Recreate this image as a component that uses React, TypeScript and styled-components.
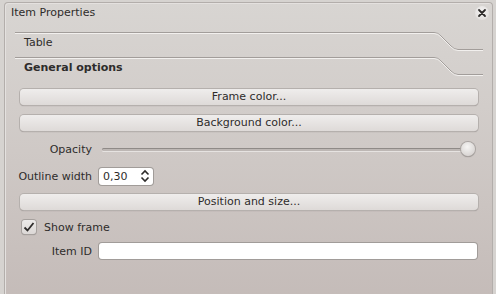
import React from 'react';
import styled, { createGlobalStyle } from 'styled-components';

const Global = createGlobalStyle`
  html, body {
    margin: 0;
    padding: 0;
    background: #d6d3d0;
  }
  body {
    font-family: "DejaVu Sans", "Liberation Sans", sans-serif;
    font-size: 11px;
    color: #2e2c2b;
  }
`;

const TabLine = ({ bold, label }: { bold?: boolean; label: string }) => (
  <Header>
    <svg className="line" width="470" height="26" viewBox="0 0 470 26">
      <path
        d="M0 1.5 H419 Q423 1.5 426 5 L436 15 Q439 18.5 443 18.5 H468"
        fill="none"
        stroke="#a29d9a"
        strokeWidth="1"
      />
      <path
        d="M0 2.5 H419 Q423 2.5 426 6 L436 16 Q439 19.5 443 19.5 H468"
        fill="none"
        stroke="#f2f0ee"
        strokeWidth="1"
      />
    </svg>
    <HeaderText $bold={bold}>{label}</HeaderText>
  </Header>
);

const App = () => {
  return (
    <Wrap>
      <Global />
      <Dock>
        <Title>
          <span>Item Properties</span>
          <Close>
            <svg width="10" height="10" viewBox="0 0 10 10">
              <path d="M2 2 L8 8 M8 2 L2 8" stroke="#2d2b2a" strokeWidth="1.8" strokeLinecap="round" />
            </svg>
          </Close>
        </Title>
        <Body>
          <TabLine label="Table" />
          <TabLine bold label="General options" />
          <Form>
            <Button>Frame color...</Button>
            <Button $top={10}>Background color...</Button>
            <Row $top={9}>
              <Label>Opacity</Label>
              <Slider>
                <div className="groove" />
                <div className="handle" />
              </Slider>
            </Row>
            <Row $top={9}>
              <Label>Outline width</Label>
              <Spin>
                <span>0,30</span>
                <svg width="10" height="14" viewBox="0 0 10 14">
                  <path d="M1.5 5.5 L5 2 L8.5 5.5 M1.5 8.5 L5 12 L8.5 8.5" fill="none" stroke="#2d2b2a" strokeWidth="1.6" />
                </svg>
              </Spin>
            </Row>
            <Button $top={9}>Position and size...</Button>
            <Check>
              <Box>
                <svg width="12" height="12" viewBox="0 0 12 12">
                  <path d="M1.5 6.5 L4.5 9.5 L10.5 2" fill="none" stroke="#2d2b2a" strokeWidth="1.8" />
                </svg>
              </Box>
              <span>Show frame</span>
            </Check>
            <Row $top={6}>
              <Label>Item ID</Label>
              <TextInput />
            </Row>
          </Form>
        </Body>
      </Dock>
    </Wrap>
  );
};

export default App;

const Wrap = styled.div`
  width: 496px;
  height: 294px;
  overflow: hidden;
  background: #d6d3d0;
  padding: 2px 3px 0 4px;
  box-sizing: border-box;
`;

const Dock = styled.div`
  height: 300px;
  border: 1px solid #b3aeab;
  border-bottom: none;
  border-radius: 4px 4px 0 0;
  background: linear-gradient(to bottom, #d8d5d2 0%, #d2cdca 35%, #c4bbb8 100%);
  box-shadow: inset 1px 1px 0 #e4e1df;
  box-sizing: border-box;
`;

const Title = styled.div`
  display: flex;
  align-items: center;
  justify-content: space-between;
  height: 18px;
  padding: 0 3px 1px 6px;
  font-size: 11px;
  color: #2e2c2b;
`;

const Close = styled.div`
  width: 14px;
  height: 14px;
  margin-top: 2px;
  border-radius: 50%;
  background: radial-gradient(circle at 50% 40%, #f4f3f2, #dcd9d7);
  display: flex;
  align-items: center;
  justify-content: center;
`;

const Body = styled.div`
  padding: 0 0 0 10px;
`;

const Header = styled.div`
  position: relative;
  height: 25px;
  &:first-child {
    margin-top: 11px;
  }
  .line {
    position: absolute;
    left: 0;
    top: -2px;
  }
`;

const HeaderText = styled.div<{ $bold?: boolean }>`
  position: relative;
  padding: 3px 0 0 9px;
  font-weight: ${(p) => (p.$bold ? 700 : 400)};
  line-height: 14px;
`;

const Form = styled.div`
  display: flex;
  flex-direction: column;
  padding: 6px 14px 0 5px;
`;

const Button = styled.div<{ $top?: number }>`
  height: 16px;
  margin-top: ${(p) => p.$top ?? 0}px;
  line-height: 16px;
  text-align: center;
  border-radius: 4px;
  background: linear-gradient(to bottom, #efedec, #dedad8);
  box-shadow: 0 0 0 1px #b5b0ad, 0 1px 1px #8e8986;
  color: #2e2c2b;
`;

const Row = styled.div<{ $top?: number }>`
  display: flex;
  align-items: center;
  height: 18px;
  margin-top: ${(p) => p.$top ?? 0}px;
  margin-left: -1px;
`;

const Label = styled.div`
  display: flex;
  justify-content: flex-end;
  width: 73px;
  flex: none;
  white-space: nowrap;
  margin-right: 7px;
`;

const Slider = styled.div`
  position: relative;
  flex: 1;
  height: 18px;
  margin-left: 3px;
  margin-right: 1px;
  .groove {
    position: absolute;
    left: 0;
    right: 4px;
    top: 8px;
    height: 3px;
    border-radius: 2px;
    background: #bdb7b4;
    box-shadow: inset 0 1px 0 #8f8a87, 0 1px 0 #e6e3e1;
  }
  .handle {
    position: absolute;
    right: 2px;
    top: 2px;
    width: 14px;
    height: 14px;
    border-radius: 50%;
    background: radial-gradient(circle at 45% 35%, #f6f5f4, #d6d2d0 80%);
    box-shadow: 0 0 0 1px #a9a4a1, 0 1px 1px #7f7a77;
  }
`;

const Spin = styled.div`
  display: flex;
  align-items: center;
  justify-content: space-between;
  width: 54px;
  height: 17px;
  padding: 0 3px 0 4px;
  box-sizing: border-box;
  background: #fff;
  border-radius: 3px;
  box-shadow: 0 0 0 1px #a19c99;
`;

const Check = styled.div`
  display: flex;
  align-items: center;
  gap: 8px;
  height: 18px;
  margin-top: 8px;
  margin-left: 2px;
`;

const Box = styled.div`
  width: 14px;
  height: 14px;
  border-radius: 3px;
  background: linear-gradient(to bottom, #eceae9, #dcd8d6);
  box-shadow: 0 0 0 1px #a6a19e, 0 1px 1px #8a8582;
  display: flex;
  align-items: center;
  justify-content: center;
`;

const TextInput = styled.div`
  flex: 1;
  height: 16px;
  background: #fff;
  border-radius: 3px;
  box-shadow: 0 0 0 1px #a19c99;
  margin-right: 1px;
`;
